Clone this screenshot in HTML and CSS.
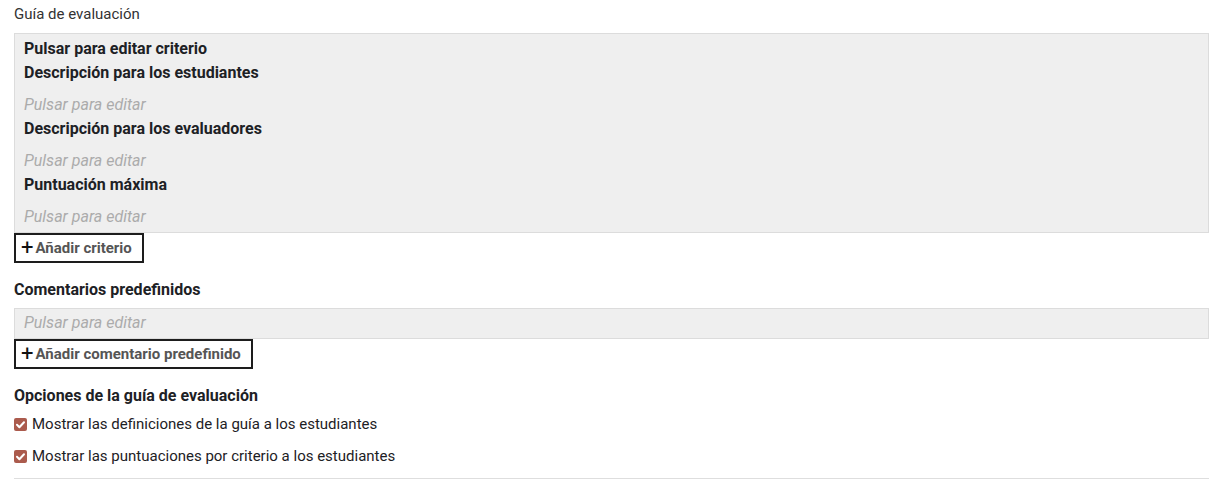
FILE: index.html
```html
<!DOCTYPE html>
<html lang="es">
<head>
<meta charset="utf-8">
<link rel="stylesheet" href="styles.css">
</head>
<body>
<div class="page">
  <div class="title">Guía de evaluación</div>
  <div class="criteria">
    <div class="label">Pulsar para editar criterio</div>
    <div class="label">Descripción para los estudiantes</div>
    <div class="placeholder spaced">Pulsar para editar</div>
    <div class="label">Descripción para los evaluadores</div>
    <div class="placeholder spaced">Pulsar para editar</div>
    <div class="label">Puntuación máxima</div>
    <div class="placeholder spaced">Pulsar para editar</div>
  </div>
  <button class="add-btn"><span class="plus">+</span>Añadir criterio</button>

  <div class="heading">Comentarios predefinidos</div>
  <div class="comments">
    <div class="placeholder">Pulsar para editar</div>
  </div>
  <button class="add-btn"><span class="plus">+</span>Añadir comentario predefinido</button>

  <div class="heading options-heading">Opciones de la guía de evaluación</div>
  <label class="option">
    <svg class="check" width="13" height="13" viewBox="0 0 13 13"><rect x="0" y="0" width="13" height="13" rx="2" fill="#ab5b4d"/><path d="M3 6.8 L5.4 9.2 L10 4.2" stroke="#fff" stroke-width="2" fill="none" stroke-linecap="round" stroke-linejoin="round"/></svg>
    <span>Mostrar las definiciones de la guía a los estudiantes</span>
  </label>
  <label class="option second">
    <svg class="check" width="13" height="13" viewBox="0 0 13 13"><rect x="0" y="0" width="13" height="13" rx="2" fill="#ab5b4d"/><path d="M3 6.8 L5.4 9.2 L10 4.2" stroke="#fff" stroke-width="2" fill="none" stroke-linecap="round" stroke-linejoin="round"/></svg>
    <span>Mostrar las puntuaciones por criterio a los estudiantes</span>
  </label>
  <div class="rule"></div>
</div>
</body>
</html>
```

FILE: styles.css
```css
html, body {
  margin: 0;
  padding: 0;
  background: #fff;
}
body {
  font-family: Roboto, "Liberation Sans", sans-serif;
  color: #1d2125;
}
.page {
  width: 1195px;
  padding: 4px 0 0 14px;
}
.title {
  font-size: 15px;
  line-height: 20px;
  color: #333;
  margin-bottom: 9px;
}
.criteria, .comments {
  background: #efefef;
  border: 1px solid #dcdcdc;
  padding: 2px 9px 3px;
}
.criteria {
  padding-top: 3px;
}
.label {
  font-size: 16px;
  font-weight: 700;
  line-height: 24px;
  color: #1d2125;
}
.placeholder {
  font-size: 16px;
  font-style: italic;
  line-height: 24px;
  color: #ababab;
}
.placeholder.spaced {
  margin-top: 8px;
}
.add-btn {
  display: flex;
  align-items: center;
  width: fit-content;
  box-sizing: border-box;
  height: 30px;
  margin: 0;
  padding: 0 10px 0 5px;
  border: 2px solid #1d1d1d;
  background: #fff;
  font-family: Roboto, "Liberation Sans", sans-serif;
  font-size: 15px;
  font-weight: 700;
  color: #555;
  cursor: pointer;
}
.plus {
  color: #111;
  font-size: 22px;
  font-weight: 400;
  margin-right: 2px;
  line-height: 1;
}
.heading {
  font-size: 16px;
  font-weight: 700;
  line-height: 24px;
  margin-top: 15px;
  margin-bottom: 6px;
  color: #1d2125;
}
.options-heading {
  margin-bottom: 4px;
}
.option {
  display: flex;
  align-items: center;
  gap: 5px;
  font-size: 15px;
  line-height: 24px;
  color: #1d2125;
}
.option.second {
  margin-top: 8px;
}
.check {
  flex: none;
}
.rule {
  height: 1px;
  background: #dedede;
  margin-top: 10px;
}
```
